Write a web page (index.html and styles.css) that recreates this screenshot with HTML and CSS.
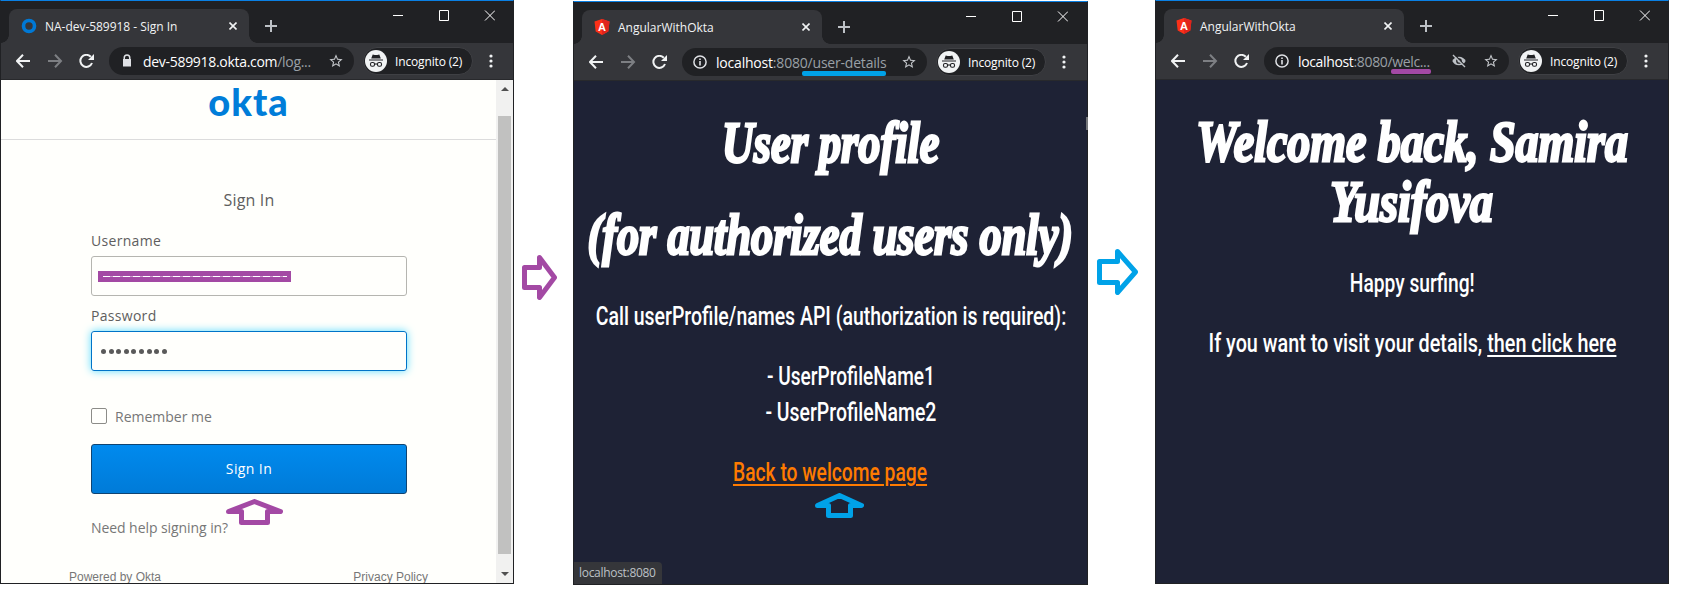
FILE: index.html
```html
<!DOCTYPE html>
<html lang="en"><head><meta charset="utf-8"><title>Okta sign-in flow</title><link rel="stylesheet" href="styles.css"></head>
<body>
<main class="flow">

<section class="window window-login">
  <header class="tabstrip">
    <div class="tab"><svg class="favicon" viewBox="0 0 16 16"><circle cx="8" cy="8" r="5.500" fill="none" stroke="#0079d6" stroke-width="3.600"/></svg><span class="tab-title">NA-dev-589918 - Sign In</span><svg class="tab-close" viewBox="0 0 8 8"><path d="M.5.5l7 7M7.500.5l-7 7"/></svg></div>
    <svg class="new-tab" viewBox="0 0 12 12"><path d="M6 0v12M0 6h12"/></svg>
    <svg class="controls" viewBox="0 0 102 11"><path d="M0 5.500h10M46.500.5h9v10h-9zM92 .5l10 10M102 .5l-10 10"/></svg>
  </header>
  <div class="toolbar">
    <svg class="nav" viewBox="0 0 78 14"><path class="on" d="M14 7H1.500M7 .8L1 7l6 6.200"/><path class="off" d="M32 7h12.500M39 .8L45 7l-6 6.200"/><path class="on" d="M76 9A6 6 0 1 1 74.800 2.800"/><path class="tip" d="M78 0v6h-6z"/></svg>
    <div class="omnibox"><svg class="lead" viewBox="0 0 14 14"><path class="fill" d="M3.500 5V3.800a3.500 3.500 0 0 1 7 0V5h.5v7.500H3V5zM5 5h4V3.800a2 2 0 0 0-4 0z"/></svg><span class="url">dev-589918.okta.com<i>/log...</i></span><svg class="star" viewBox="0 0 24 24"><use href="#star"/></svg></div>
    <div class="badge"><svg class="spy" viewBox="0 0 22 22"><use href="#spy"/></svg><span>Incognito (2)</span></div>
    <svg class="more" viewBox="0 0 4 14"><circle cx="2" cy="2" r="1.600"/><circle cx="2" cy="7" r="1.600"/><circle cx="2" cy="12" r="1.600"/></svg>
  </div>
  <div class="login-view">
    <div class="login-page">
      <div class="brand"><span class="logo">okta</span></div>
      <form class="signin">
        <h2>Sign In</h2>
        <label class="lbl">Username</label>
        <div class="field"><span class="redacted"></span></div>
        <label class="lbl">Password</label>
        <div class="field focus"><span class="dots"><b></b><b></b><b></b><b></b><b></b><b></b><b></b><b></b><b></b></span></div>
        <div class="remember"><span class="check"></span><span>Remember me</span></div>
        <div class="submit">Sign In</div>
        <div class="help">Need help signing in?</div>
      </form>
      <footer class="foot"><span>Powered by Okta</span><span>Privacy Policy</span></footer>
      <svg class="pointer-login purple" viewBox="0 0 57 26"><path d="M28.500 2.500L54.500 12.500H41.500V23.500H15.500V12.500H2.500Z"/></svg>
    </div>
    <div class="scrollbar"><svg viewBox="0 0 8 4"><path d="M0 4l4-4 4 4z"/></svg><div class="thumb"></div><svg viewBox="0 0 8 4"><path d="M0 0l4 4 4-4z"/></svg></div>
  </div>
</section>

<svg class="step step-one purple" viewBox="0 0 35 45"><path d="M2.500 12.500H17.500V2.500L32.500 22.500L17.500 42.500V32.500H2.500Z"/></svg>

<section class="window window-profile">
  <header class="tabstrip">
    <div class="tab"><svg class="favicon" viewBox="0 0 16 16"><use href="#shield"/><text x="8" y="12" class="shield-a">A</text></svg><span class="tab-title">AngularWithOkta</span><svg class="tab-close" viewBox="0 0 8 8"><path d="M.5.5l7 7M7.500.5l-7 7"/></svg></div>
    <svg class="new-tab" viewBox="0 0 12 12"><path d="M6 0v12M0 6h12"/></svg>
    <svg class="controls" viewBox="0 0 102 11"><path d="M0 5.500h10M46.500.5h9v10h-9zM92 .5l10 10M102 .5l-10 10"/></svg>
  </header>
  <div class="toolbar">
    <svg class="nav" viewBox="0 0 78 14"><path class="on" d="M14 7H1.500M7 .8L1 7l6 6.200"/><path class="off" d="M32 7h12.500M39 .8L45 7l-6 6.200"/><path class="on" d="M76 9A6 6 0 1 1 74.800 2.800"/><path class="tip" d="M78 0v6h-6z"/></svg>
    <div class="omnibox"><svg class="lead" viewBox="0 0 14 14"><use href="#info"/></svg><span class="url">localhost<i>:8080/user-details</i></span><svg class="star" viewBox="0 0 24 24"><use href="#star"/></svg><span class="mark mark-details"></span></div>
    <div class="badge"><svg class="spy" viewBox="0 0 22 22"><use href="#spy"/></svg><span>Incognito (2)</span></div>
    <svg class="more" viewBox="0 0 4 14"><circle cx="2" cy="2" r="1.600"/><circle cx="2" cy="7" r="1.600"/><circle cx="2" cy="12" r="1.600"/></svg>
  </div>
  <div class="app">
    <h1><span class="fit-profile">User profile</span></h1>
    <h1 class="second"><span class="fit-authorized">(for authorized users only)</span></h1>
    <p class="call"><span class="fit-call">Call userProfile/names API (authorization is required):</span></p>
    <ul><li><span class="fit-name">- UserProfileName1</span></li><li><span class="fit-name-wide">- UserProfileName2</span></li></ul>
    <p class="back"><a class="fit-back">Back to welcome page</a></p>
    <svg class="pointer-back blue" viewBox="0 0 49 25"><path d="M24.500 2.500L46.500 12.500H35.500V22.500H13.500V12.500H2.500Z"/></svg>
    <div class="status">localhost:8080</div>
  </div>
</section>

<svg class="step step-two blue" viewBox="0 0 41 46"><path d="M2.500 12.500H20.500V2.500L38.500 23L20.500 43.500V33.500H2.500Z"/></svg>

<section class="window window-welcome">
  <header class="tabstrip">
    <div class="tab"><svg class="favicon" viewBox="0 0 16 16"><use href="#shield"/><text x="8" y="12" class="shield-a">A</text></svg><span class="tab-title">AngularWithOkta</span><svg class="tab-close" viewBox="0 0 8 8"><path d="M.5.5l7 7M7.500.5l-7 7"/></svg></div>
    <svg class="new-tab" viewBox="0 0 12 12"><path d="M6 0v12M0 6h12"/></svg>
    <svg class="controls" viewBox="0 0 102 11"><path d="M0 5.500h10M46.500.5h9v10h-9zM92 .5l10 10M102 .5l-10 10"/></svg>
  </header>
  <div class="toolbar">
    <svg class="nav" viewBox="0 0 78 14"><path class="on" d="M14 7H1.500M7 .8L1 7l6 6.200"/><path class="off" d="M32 7h12.500M39 .8L45 7l-6 6.200"/><path class="on" d="M76 9A6 6 0 1 1 74.800 2.800"/><path class="tip" d="M78 0v6h-6z"/></svg>
    <div class="omnibox"><svg class="lead" viewBox="0 0 14 14"><use href="#info"/></svg><span class="url">localhost<i>:8080/welc...</i></span><svg class="eye" viewBox="0 0 24 24"><path d="M12 5.500c4.500 0 8.300 2.600 10 6.500-1.700 3.900-5.500 6.500-10 6.500S3.700 15.900 2 12c1.700-3.900 5.500-6.500 10-6.500z"/><circle cx="12" cy="12" r="3.300" class="iris"/><path class="gap" d="M5 2l17 18"/><path class="slash" d="M3 3l18 18"/></svg><svg class="star" viewBox="0 0 24 24"><use href="#star"/></svg><span class="mark mark-welcome"></span></div>
    <div class="badge"><svg class="spy" viewBox="0 0 22 22"><use href="#spy"/></svg><span>Incognito (2)</span></div>
    <svg class="more" viewBox="0 0 4 14"><circle cx="2" cy="2" r="1.600"/><circle cx="2" cy="7" r="1.600"/><circle cx="2" cy="12" r="1.600"/></svg>
  </div>
  <div class="app">
    <h1><span class="fit-welcome">Welcome back, Samira</span></h1>
    <h1><span class="fit-surname">Yusifova</span></h1>
    <p class="happy"><span class="fit-happy">Happy surfing!</span></p>
    <p class="visit"><span class="fit-visit">If you want to visit your details, <a>then click here</a></span></p>
  </div>
</section>
</main>

<svg class="defs" aria-hidden="true"><defs>
  <path id="star" d="M22 9.240l-7.190-.62L12 2 9.190 8.630 2 9.240l5.460 4.730L5.820 21 12 17.270 18.180 21l-1.630-7.030L22 9.240zM12 15.400l-3.760 2.270 1-4.280-3.320-2.880 4.380-.38L12 6.100l1.710 4.040 4.380.38-3.320 2.880 1 4.280L12 15.400z"/>
  <g id="spy"><circle cx="11" cy="11" r="11" fill="#f1f3f4"/><path fill="#202124" d="M7.700 4.500l2 .6h2.600l2-.6 1.500 4H6.200zM4 9.500h14v1H4z"/><g fill="none" stroke="#202124" stroke-width="1.100"><rect x="5.500" y="12.500" width="4" height="3.800" rx="1.500"/><rect x="12.500" y="12.500" width="4" height="3.800" rx="1.500"/><path d="M9.500 14h3"/></g></g>
  <g id="shield"><path fill="#fc3018" d="M8 0L.5 2.600l1.200 9.900L8 16l6.300-3.500 1.200-9.900z"/><path fill="#e0241c" d="M8 0l7.500 2.600-1.200 9.900L8 16z"/></g>
  <g id="info"><circle cx="7" cy="7" r="6.100" fill="none" stroke="#dfe1e5" stroke-width="1.500"/><path d="M7 6v4.500M7 3.400v1.600" stroke="#dfe1e5" stroke-width="1.600"/></g>
</defs></svg>
</body></html>
```
FILE: styles.css
```css
* { box-sizing: border-box; }
body { margin: 0; background: #fff; font-family: "Open Sans", sans-serif; height: 600px; overflow: hidden; }
svg { display: block; flex: none; }
h1, h2, p, ul { margin: 0; padding: 0; font-weight: 400; }
i { font-style: normal; color: #9aa0a6; }
span, a { white-space: nowrap; }
.defs { position: absolute; width: 0; height: 0; }

.flow { display: flex; align-items: flex-start; }
.window { position: relative; width: 514px; height: 584px; border: 1px solid #202124; border-top-color: #0a80e4; background: #202124; flex: none; display: flex; flex-direction: column; }
.window-profile { width: 515px; margin-top: 1px; }
.window-profile::after { content: ""; position: absolute; right: -1px; top: 115px; width: 2px; height: 13px; background: #75777a; }
.step-one { width: 35px; height: 45px; margin: 255px 16px 0 8px; }
.step-two { width: 41px; height: 46px; margin: 249px 17px 0 9px; }
.purple, .blue { fill: none; stroke-linejoin: round; stroke-width: 5; }
.purple { stroke: #a349a4; }
.blue { stroke: #00a2e8; }

/* Browser chrome */
.tabstrip { height: 42px; display: flex; align-items: flex-start; padding: 8px 18px 0 8px; flex: none; }
.tab { position: relative; width: 240px; height: 34px; border-radius: 8px 8px 0 0; background: #35363a; display: flex; align-items: center; padding: 0 12px; color: #f1f3f4; font-size: 12px; }
.tab::before, .tab::after { content: ""; position: absolute; bottom: 0; width: 8px; height: 8px; }
.tab::before { left: -8px; background: radial-gradient(circle at 0 0, transparent 7.5px, #35363a 8px); }
.tab::after { right: -8px; background: radial-gradient(circle at 100% 0, transparent 7.5px, #35363a 8px); }
.favicon { width: 16px; height: 16px; margin-right: 8px; }
.tab-title { flex: 1; }
.window-login .tab-title { letter-spacing: -.03px; }
.shield-a { font: 700 11px "Liberation Sans", sans-serif; fill: #fff; text-anchor: middle; }
.tab-close { width: 8px; height: 8px; stroke: #f1f3f4; stroke-width: 1.6; }
.new-tab { width: 12px; height: 12px; margin: 11px 0 0 16px; stroke: #bdc1c6; stroke-width: 2; }
.controls { width: 102px; height: 11px; margin: 1px 0 0 auto; fill: none; stroke: #fff; stroke-width: 1; }
.window-profile .controls { margin-right: 1px; }
.toolbar { height: 37px; background: #35363a; border-bottom: 1px solid #28292c; display: flex; align-items: center; padding-left: 15px; flex: none; }
.nav { width: 78px; height: 14px; fill: none; stroke-width: 2; }
.nav .on { stroke: #f1f3f4; }
.nav .off { stroke: #7d7f83; }
.nav .tip { fill: #f1f3f4; }
.omnibox { position: relative; width: 245px; height: 28px; margin-left: 15px; border-radius: 14px; background: #202124; display: flex; align-items: center; padding: 0 10px; color: #fff; font-size: 14px; }
.lead { width: 14px; height: 14px; margin: 0 9px 0 1px; }
.lead .fill { fill: #dfe1e5; fill-rule: evenodd; }
.url { flex: 1; letter-spacing: -.3px; }
.window-profile .url { letter-spacing: -.2px; }
.window-welcome .url { letter-spacing: -.35px; }
.star { width: 16px; height: 16px; fill: #c4c7cb; }
.eye { width: 16px; height: 16px; fill: #bdc1c6; margin-right: 16px; }
.eye .iris { fill: none; stroke: #202124; stroke-width: 2; }
.eye .gap { stroke: #202124; stroke-width: 2; }
.eye .slash { stroke: #bdc1c6; stroke-width: 2; }
.mark { position: absolute; height: 5px; border-radius: 2px; }
.mark-details { left: 120px; top: 23px; width: 84px; background: #00a2e8; }
.mark-welcome { left: 127px; top: 22px; width: 40px; background: #a349a4; }
.badge { width: 110px; height: 28px; margin-left: 9px; border: 1px solid #3f4044; border-radius: 14px; background: #202124; display: flex; align-items: center; padding-left: 1px; gap: 8px; color: #fff; font-size: 12px; letter-spacing: -.15px; }
.spy { width: 22px; height: 22px; }
.more { width: 4px; height: 14px; margin-left: 16px; fill: #f1f3f4; }

/* Sign-in page */
.login-view { flex: 1; min-height: 0; display: flex; background: #fffffc; overflow: hidden; }
.login-page { position: relative; flex: 1; }
.brand { height: 60px; border-bottom: 1px solid #dcdcdc; display: flex; justify-content: center; }
.logo { font: 900 38px/42px Lato, sans-serif; letter-spacing: 1px; color: #007dd9; }
.signin { padding: 0 89px 0 90px; font-size: 14px; color: #5e5e5e; }
h2 { font-size: 16px; line-height: 20px; letter-spacing: .15px; margin-top: 50px; padding-bottom: 1px; text-align: center; }
.lbl { display: block; line-height: 20px; margin-top: 20px; letter-spacing: .3px; }
.field { height: 40px; margin-top: 5px; border: 1px solid #b5b5b0; border-radius: 3px; display: flex; align-items: center; padding-left: 6px; }
.field + .lbl { margin-top: 10px; }
.field.focus { border-color: #0074c8; box-shadow: 0 0 8px #5bdcff; padding-left: 9px; }
.redacted { width: 193px; height: 11px; background: repeating-linear-gradient(90deg, #fff 0 7px, #c79ac8 7px 10px) center / 184px 1px no-repeat #a349a4; }
.dots { display: flex; gap: 2.600px; }
.dots b { width: 5px; height: 5px; border-radius: 50%; background: #5a5a5a; }
.remember { display: flex; align-items: center; margin-top: 37px; gap: 8px; height: 16px; color: #777; }
.check { width: 16px; height: 16px; border: 1px solid #8c8c88; border-radius: 2px; }
.submit { height: 50px; margin-top: 20px; border: 1px solid #0f4472; border-radius: 3px; background: linear-gradient(#008aee, #007bd8); color: #fff; text-align: center; line-height: 48px; letter-spacing: .4px; }
.help { margin-top: 24px; line-height: 20px; letter-spacing: -.07px; color: #777; }
.foot { font: 12px/14px "Liberation Sans", sans-serif; color: #777; display: flex; justify-content: space-between; padding: 0 68px; margin-top: 32px; }
.pointer-login { position: absolute; left: 225px; top: 419px; width: 57px; height: 26px; }
.scrollbar { width: 17px; background: #f1f1f0; display: flex; flex-direction: column; align-items: center; padding: 7px 0; fill: #505050; }
.scrollbar svg { width: 8px; height: 4px; }
.thumb { flex: 1; width: 13px; margin: 25px 0 18px; background: #c1c1c0; }

/* Application pages */
.app { position: relative; flex: 1; background: #1e2235; color: #fff; font-family: Roboto, sans-serif; font-weight: 500; }
.app h1 { font: italic 700 56px/60px "Liberation Serif", serif; display: flex; justify-content: center; -webkit-text-stroke: 2.8px #fff; }
.app h1:first-child { margin-top: 32px; }
.app p, .app ul { font-size: 25px; font-weight: 500; line-height: 36px; display: flex; justify-content: center; }
.app .second { margin-top: 32px; }
.app .call { margin-top: 34px; }
.app ul { flex-direction: column; align-items: center; list-style: none; margin-top: 24px; padding-left: 40px; }
.app .back { margin-top: 24px; color: #ff7b00; }
a { text-decoration: underline; text-decoration-thickness: 2px; text-underline-offset: 3px; }
.app .happy { margin-top: 34px; }
.app .visit { margin-top: 24px; }
.pointer-back { position: absolute; left: 241px; top: 412px; width: 49px; height: 25px; }
.status { position: absolute; left: 0; bottom: 0; width: 88px; height: 22px; border-radius: 0 4px 0 0; background: #35363a; color: #bdc1c6; font: 12px/22px "Open Sans", sans-serif; letter-spacing: -.3px; padding-left: 5px; }

/* Condensed letterforms */
[class^="fit-"] { display: inline-block; }
.fit-profile { transform: scaleX(.79); }
.fit-authorized { transform: scaleX(.79); }
.fit-welcome { transform: scaleX(.82); }
.fit-surname { transform: scaleX(.825); }
.fit-call { transform: scaleX(.779); }
.fit-name { transform: scaleX(.764); }
.fit-name-wide { transform: scaleX(.778); }
.fit-back { transform: scaleX(.77); }
.fit-happy { transform: scaleX(.768); }
.fit-visit { transform: scaleX(.792); }
```
